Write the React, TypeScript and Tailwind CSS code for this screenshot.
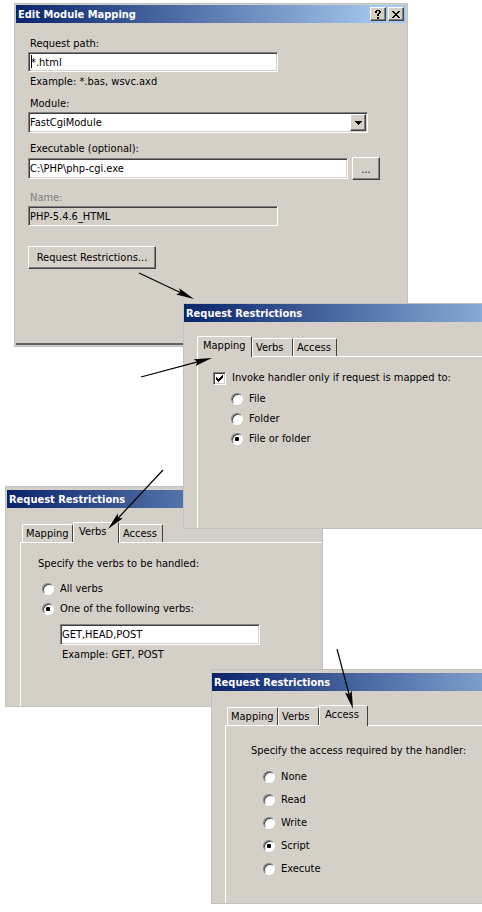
import type { ReactNode } from "react";

const sunken =
  "border border-t-[#808080] border-l-[#808080] border-r-white border-b-white shadow-[inset_1px_1px_0_#404040,inset_-1px_-1px_0_#d4d0c8] outline-none";
const raised =
  "border border-t-white border-l-white border-r-[#404040] border-b-[#404040] bg-[#d4d0c8] shadow-[inset_-1px_-1px_0_#808080]";
const titleFill = "bg-[linear-gradient(to_right,#0a246a,#a6caf0_370px)]";

function TitleBar({ title, children }: { title: string; children?: ReactNode }) {
  return (
    <header className={`flex h-[18px] items-center justify-between px-[2px] ${titleFill}`}>
      <h2 className="pt-[2px] font-bold whitespace-nowrap text-white">{title}</h2>
      {children}
    </header>
  );
}

const tabs = [
  { name: "Mapping", width: "w-[51px]", activeWidth: "w-[55px]" },
  { name: "Verbs", width: "w-[41px]", activeWidth: "w-[46px]" },
  { name: "Access", width: "w-[44px]", activeWidth: "w-[49px]" },
];

function Tabs({ active }: { active: string }) {
  return (
    <div role="tablist" className="flex items-end">
      {tabs.map(({ name, width, activeWidth }) => {
        const on = name === active;
        return (
          <button
            key={name}
            type="button"
            role="tab"
            aria-selected={on}
            className={`rounded-t-[2px] border-t border-r border-l border-t-white border-r-[#404040] border-l-white bg-[#d4d0c8] text-left whitespace-nowrap ${
              on ? `relative z-10 -mb-px h-[21px] pb-[2px] pl-[5px] ${activeWidth}` : `h-[18px] pt-px pl-[3px] ${width}`
            }`}
          >
            {name}
          </button>
        );
      })}
    </div>
  );
}

function Radio({
  name,
  label,
  checked = false,
  row,
}: {
  name: string;
  label: string;
  checked?: boolean;
  row: string;
}) {
  return (
    <label className={`flex items-center gap-[6px] ${row}`}>
      <input
        type="radio"
        name={name}
        defaultChecked={checked}
        className="size-3 shrink-0 appearance-none rounded-full border border-t-[#808080] border-r-white border-b-white border-l-[#808080] bg-white shadow-[inset_1px_1px_0_#404040] checked:bg-[radial-gradient(circle,#000_2px,#fff_2.5px)]"
      />
      {label}
    </label>
  );
}

function Arrow({ x1, y1, x2, y2 }: { x1: number; y1: number; x2: number; y2: number }) {
  const length = Math.hypot(x2 - x1, y2 - y1);
  const ux = (x2 - x1) / length;
  const uy = (y2 - y1) / length;
  const bx = x2 - ux * 18;
  const by = y2 - uy * 18;
  const points = [
    [x2, y2],
    [bx - uy * 3.5, by + ux * 3.5],
    [bx + ux * 3, by + uy * 3],
    [bx + uy * 3.5, by - ux * 3.5],
  ];
  return (
    <g>
      <line x1={x1} y1={y1} x2={bx + ux * 4} y2={by + uy * 4} stroke="#000" strokeWidth="1.2" />
      <polygon points={points.map((p) => p.join(",")).join(" ")} fill="#000" />
    </g>
  );
}

function EditMapping() {
  return (
    <section className="absolute top-[3px] left-[14px] w-[394px] border border-[#c0c0c0] bg-[#d4d0c8] p-px">
      <TitleBar title="Edit Module Mapping">
        <div className="flex gap-[2px]">
          <button type="button" aria-label="Help" className={`flex h-[14px] w-4 items-center justify-center ${raised}`}>
            <svg width="6" height="9" viewBox="0 0 6 9" shapeRendering="crispEdges" aria-hidden="true">
              <path d="M1 0h4v1H1zM0 1h2v2H0zM4 1h2v2H4zM3 3h2v1H3zM2 4h2v2H2zM2 7h2v2H2z" />
            </svg>
          </button>
          <button type="button" aria-label="Close" className={`flex h-[14px] w-4 items-center justify-center ${raised}`}>
            <svg width="8" height="7" viewBox="0 0 8 7" shapeRendering="crispEdges" aria-hidden="true">
              <path d="M0 0h2v1H0zM6 0h2v1H6zM1 1h2v1H1zM5 1h2v1H5zM2 2h4v1H2zM3 3h2v1H3zM2 4h4v1H2zM1 5h2v1H1zM5 5h2v1H5zM0 6h2v1H0zM6 6h2v1H6z" />
            </svg>
          </button>
        </div>
      </TitleBar>
      <form className="flex flex-col items-start border-b-2 border-[#606060] px-3 pt-[14px] pb-[74px]">
        <label htmlFor="path" className="mb-px ml-[2px]">Request path:</label>
        <div className="relative flex">
          <input id="path" defaultValue="*.html" className={`h-5 w-[250px] bg-white px-[2px] ${sunken}`} />
          <span className="pointer-events-none absolute top-[3px] left-[3px] h-[13px] w-px bg-black" />
        </div>
        <p className="mt-[3px] ml-[2px]">Example: *.bas, wsvc.axd</p>
        <label htmlFor="module" className="mt-2 mb-px ml-[2px]">Module:</label>
        <div className="relative h-[21px] w-[340px]">
          <select id="module" className={`h-full w-full appearance-none bg-white px-px ${sunken}`}>
            <option>FastCgiModule</option>
          </select>
          <span className={`pointer-events-none absolute top-[2px] right-[2px] flex h-[17px] w-4 items-center justify-center ${raised}`}>
            <svg width="7" height="4" viewBox="0 0 7 4" shapeRendering="crispEdges" aria-hidden="true">
              <path d="M0 0h7v1H0zM1 1h5v1H1zM2 2h3v1H2zM3 3h1v1H3z" />
            </svg>
          </span>
        </div>
        <label htmlFor="exe" className="mt-[9px] mb-px ml-[2px]">Executable (optional):</label>
        <div className="flex items-center gap-1">
          <input id="exe" defaultValue="C:\PHP\php-cgi.exe" className={`h-[21px] w-[320px] bg-white px-px ${sunken}`} />
          <button type="button" aria-label="Browse" className={`h-[23px] w-7 pt-[2px] ${raised}`}>...</button>
        </div>
        <label htmlFor="name" className="mt-[11px] mb-px ml-[2px] text-[#808080]">Name:</label>
        <input id="name" readOnly defaultValue="PHP-5.4.6_HTML" className={`h-5 w-[250px] bg-[#d4d0c8] px-px ${sunken}`} />
        <button type="button" className={`mt-5 h-[23px] w-32 pt-px whitespace-nowrap ${raised}`}>Request Restrictions...</button>
      </form>
    </section>
  );
}

function MappingTab() {
  return (
    <section className="absolute top-[303px] right-0 left-[183px] flex h-[226px] flex-col border border-r-0 border-[#c0c0c0] bg-[#d4d0c8]">
      <TitleBar title="Request Restrictions" />
      <div className="flex grow flex-col pt-[14px] pl-[13px]">
        <Tabs active="Mapping" />
        <div className="grow border-t border-l border-white pt-[10px] pl-[15px]">
          <label className="flex h-[22px] items-center gap-[6px] whitespace-nowrap">
            <span className="relative flex size-[13px]">
              <input type="checkbox" defaultChecked className={`size-[13px] appearance-none bg-white ${sunken}`} />
              <svg className="pointer-events-none absolute top-[3px] left-[3px]" width="7" height="7" viewBox="0 0 7 7" shapeRendering="crispEdges" aria-hidden="true">
                <path d="M0 2h1v3H0zM1 3h1v3H1zM2 4h1v3H2zM3 3h1v3H3zM4 2h1v3H4zM5 1h1v3H5zM6 0h1v3H6z" />
              </svg>
            </span>
            Invoke handler only if request is mapped to:
          </label>
          <div className="ml-[18px]">
            <Radio name="target" label="File" row="h-5" />
            <Radio name="target" label="Folder" row="h-5" />
            <Radio name="target" label="File or folder" checked row="h-5" />
          </div>
        </div>
      </div>
    </section>
  );
}

function VerbsTab() {
  return (
    <section className="absolute top-[486px] left-[5px] flex h-[221px] w-[318px] flex-col border border-[#c0c0c0] bg-[#d4d0c8] pt-[3px] pl-px">
      <TitleBar title="Request Restrictions" />
      <div className="flex grow flex-col pt-[14px] pl-[13px]">
        <div className="pl-[2px]">
          <Tabs active="Verbs" />
        </div>
        <div className="grow border-t border-l border-white pt-[14px] pl-[17px]">
          <p>Specify the verbs to be handled:</p>
          <div className="mt-2 ml-1">
            <Radio name="verbs" label="All verbs" row="h-5" />
            <Radio name="verbs" label="One of the following verbs:" checked row="h-5" />
          </div>
          <input aria-label="Verbs" defaultValue="GET,HEAD,POST" className={`mt-[5px] ml-[22px] block h-[21px] w-[200px] bg-white px-px ${sunken}`} />
          <p className="mt-[3px] ml-6">Example: GET, POST</p>
        </div>
      </div>
    </section>
  );
}

function AccessTab() {
  return (
    <section className="absolute top-[669px] right-0 left-[211px] flex h-[235px] flex-col border border-r-0 border-[#c0c0c0] bg-[#d4d0c8] pt-[3px]">
      <TitleBar title="Request Restrictions" />
      <div className="flex grow flex-col pt-[14px] pl-[13px]">
        <div className="pl-[2px]">
          <Tabs active="Access" />
        </div>
        <div className="grow border-t border-l border-white pt-[18px] pl-[25px]">
          <p className="whitespace-nowrap">Specify the access required by the handler:</p>
          <div className="mt-[7px] ml-3">
            <Radio name="access" label="None" row="h-[23px]" />
            <Radio name="access" label="Read" row="h-[23px]" />
            <Radio name="access" label="Write" row="h-[23px]" />
            <Radio name="access" label="Script" checked row="h-[23px]" />
            <Radio name="access" label="Execute" row="h-[23px]" />
          </div>
        </div>
      </div>
    </section>
  );
}

export default function App() {
  return (
    <main className="relative min-h-screen overflow-x-clip bg-white font-[Tahoma,'DejaVu_Sans_Condensed','DejaVu_Sans',sans-serif] text-[11px] leading-[14px] text-black">
      <EditMapping />
      <VerbsTab />
      <MappingTab />
      <AccessTab />
      <svg className="pointer-events-none absolute top-0 left-0 z-20" width="482" height="912" viewBox="0 0 482 912" aria-hidden="true">
        <Arrow x1={139} y1={273} x2={194} y2={299} />
        <Arrow x1={141} y1={377} x2={212} y2={358} />
        <Arrow x1={163} y1={470} x2={108} y2={529} />
        <Arrow x1={337} y1={649} x2={353} y2={709} />
      </svg>
    </main>
  );
}
